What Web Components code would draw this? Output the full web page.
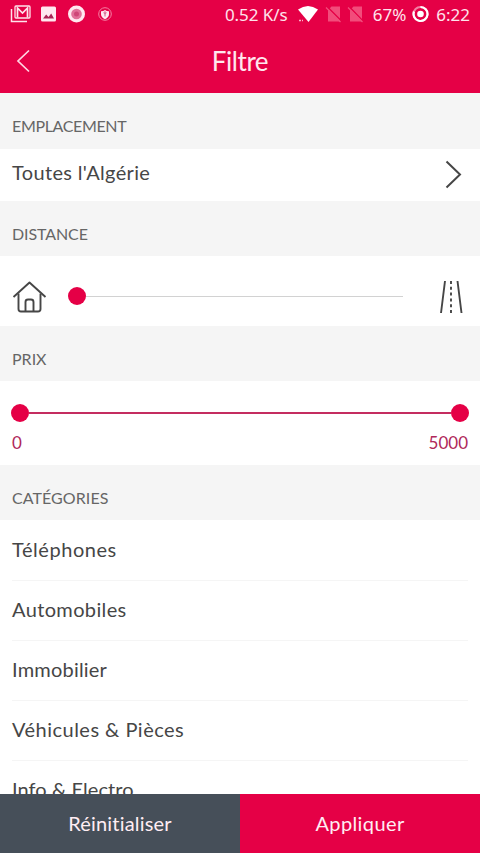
<!DOCTYPE html>
<html lang="fr">
<head>
<meta charset="utf-8">
<meta name="viewport" content="width=device-width, initial-scale=1">
<title>Filtre</title>
<style>
  body {
    margin: 0;
    height: 100vh;
    overflow: hidden;
    background-color: #fff;
    color: #464646;
    font-family: Lato, "Open Sans", sans-serif;
    font-size: 20px;
    font-variant-ligatures: none;
    --accent: #e50046;
  }
</style>
</head>
<body>
<filter-page>
  <status-bar slot="top"></status-bar>
  <nav-header slot="top">Filtre</nav-header>

  <filter-section heading="EMPLACEMENT" style="--head: 56px; --tracking: -0.35px">
    <location-row>Toutes l'Algérie</location-row>
  </filter-section>
  <filter-section heading="DISTANCE" style="--tracking: -0.1px">
    <distance-row></distance-row>
  </filter-section>
  <filter-section heading="PRIX">
    <price-range min="0" max="5000"></price-range>
  </filter-section>
  <filter-section heading="CATÉGORIES" style="--tracking: 0.07px">
    <category-item style="letter-spacing: 0.55px">Téléphones</category-item>
    <category-item style="letter-spacing: 0.36px">Automobiles</category-item>
    <category-item style="letter-spacing: 0.2px">Immobilier</category-item>
    <category-item style="letter-spacing: 0.48px">Véhicules &amp; Pièces</category-item>
    <category-item style="letter-spacing: 0.08px">Info &amp; Electro</category-item>
  </filter-section>

  <action-button slot="actions" style="--fill: #464f59; letter-spacing: 0.2px">Réinitialiser</action-button>
  <action-button slot="actions" style="--fill: #e50046; letter-spacing: 0.4px">Appliquer</action-button>
</filter-page>

<script>
class BaseElement extends HTMLElement {
  constructor() {
    super();
    this.shadowDOM = this.attachShadow({ mode: "open" });
  }

  connectedCallback() {
    this.render();
  }
}

class FilterPage extends BaseElement {
  render() {
    this.shadowDOM.innerHTML = `
      <style>
        :host {
          display: flex;
          flex-direction: column;
          height: 100vh;
        }
        header {
          flex: none;
          height: 93px;
          background-color: var(--accent);
        }
        main {
          flex: 1;
          min-height: 0;
          overflow: hidden;
        }
        footer {
          flex: none;
          display: flex;
          height: 59px;
        }
      </style>
      <header><slot name="top"></slot></header>
      <main><slot></slot></main>
      <footer><slot name="actions"></slot></footer>`;
  }
}

class StatusBar extends BaseElement {
  render() {
    this.shadowDOM.innerHTML = `
      <style>
        :host {
          display: flex;
          justify-content: space-between;
          height: 28px;
          padding: 0 10px;
          color: #ffe3ec;
          font-family: "Noto Sans", sans-serif;
          font-size: 17px;
          line-height: 29px;
        }
        .group {
          display: flex;
          align-items: center;
        }
        svg {
          display: block;
        }
        .speed { margin-right: 9px; letter-spacing: -0.05px; }
        .battery { margin-left: 10px; }
        .ring { margin: 0 7px 0 6px; }
      </style>
      <div class="group">
        <svg width="104" height="28" viewBox="10 0 104 28">
          <g fill="none" stroke="#ffe3ec">
            <path d="M11.500 9v12.500H27" stroke-width="1.500"/>
            <rect x="15" y="6" width="15" height="12" rx="1" stroke-width="1.300"/>
            <path d="M17.500 17.500V8l5 5 5-5v9.500" stroke-width="1.700"/>
          </g>
          <rect x="41" y="6.500" width="15" height="15" rx="1.500" fill="#ffe8f0"/>
          <path d="M43 18.500l3.200-4 2.300 2.600 2.700-3.600L54 18.500z" fill="#a92455"/>
          <circle cx="76.500" cy="14" r="8.500" fill="#ffe8f0"/>
          <circle cx="76.500" cy="14" r="5.300" fill="#e17099"/>
          <circle cx="76.500" cy="14" r="2.500" fill="#ce4778"/>
          <circle cx="105" cy="14" r="6.300" fill="none" stroke="#f47fa3"/>
          <path d="M101 11.200q2.500 0 4-1.200 1.500 1.200 4 1.200v3q0 3.200-4 5-4-1.800-4-5z" fill="#ffe8f0"/>
          <path d="M105 14v2.500M104 12.800a1 1 0 1 0 2 0a1 1 0 1 0-2 0" fill="none" stroke="#ce4778" stroke-width=".9"/>
        </svg>
      </div>
      <div class="group">
        <span class="speed">0.52 K/s</span>
        <svg width="66" height="28" viewBox="296 0 66 28">
          <path d="M297 9.500q10-7 20 0L307.500 22z" fill="#fff"/>
          <path d="M298 20.500h2M301 20.500h1" stroke="#ffb3cb" stroke-width="1.500"/>
          <path d="M330.500 6.500h8.500v15h-12v-11.500z M352.500 6.500h8.500v15h-12v-11.500z" fill="#f24c7b"/>
          <path d="M326.500 7l14.500 14.500M348.500 7l14 14.500" stroke="#e50046" stroke-width="1.500"/>
          <path d="M325 7.500l14.500 14.500M347 7.500l14.500 14.500" stroke="#f24c7b" stroke-width="1.300"/>
        </svg>
        <span class="battery">67%</span>
        <svg class="ring" width="17" height="28" viewBox="0 0 17 28">
          <circle cx="8.500" cy="14" r="7" fill="none" stroke="#f37fa3" stroke-width="2"/>
          <path d="M8.500 7a7 7 0 1 1-6.500 4.500" fill="none" stroke="#fff" stroke-width="2.200"/>
          <circle cx="8.500" cy="14" r="3.300" fill="#fff"/>
        </svg>
        <span>6:22</span>
      </div>`;
  }
}

class NavHeader extends BaseElement {
  render() {
    this.shadowDOM.innerHTML = `
      <style>
        :host {
          display: grid;
          grid-template-columns: 48px 1fr 48px;
          align-items: center;
          height: 65px;
          color: #ffe6ee;
          font-size: 26px;
          text-align: center;
          letter-spacing: -0.45px;
        }
        svg { display: block; }
      </style>
      <svg width="48" height="65" viewBox="0 0 48 65" fill="none" stroke="#ffd5e2" stroke-width="1.700">
        <path d="M29 22.500L18 33l11 10.500"/>
      </svg>
      <span><slot></slot></span>`;
  }
}

class FilterSection extends BaseElement {
  render() {
    this.shadowDOM.innerHTML = `
      <style>
        :host {
          display: block;
        }
        h2 {
          box-sizing: border-box;
          height: var(--head, 55px);
          margin: 0;
          padding: 4px 12px 0;
          background-color: #f5f5f5;
          color: #666;
          font-size: 16px;
          font-weight: normal;
          letter-spacing: var(--tracking, 0);
          line-height: 57px;
        }
      </style>
      <h2>${this.getAttribute("heading")}</h2>
      <slot></slot>`;
  }
}

class LocationRow extends BaseElement {
  render() {
    this.shadowDOM.innerHTML = `
      <style>
        :host {
          display: flex;
          justify-content: space-between;
          height: 52px;
          padding: 0 18px 0 12px;
          letter-spacing: 0.35px;
          line-height: 46px;
        }
      </style>
      <span><slot></slot></span>
      <svg width="18" height="52" viewBox="444 149 18 52" fill="none" stroke="#464646" stroke-width="2">
        <path d="M446.500 161.500L460 174.500l-13.500 13"/>
      </svg>`;
  }
}

class DistanceRow extends BaseElement {
  render() {
    this.shadowDOM.innerHTML = `
      <style>
        :host {
          display: flex;
          align-items: center;
          height: 70px;
          padding: 0 17px 0 12px;
        }
        .slider {
          flex: 1;
          display: flex;
          align-items: center;
          margin: 10px 36px 0 21px;
        }
        .knob {
          width: 18px;
          height: 18px;
          border-radius: 50%;
          background-color: var(--accent);
        }
        .line {
          flex: 1;
          height: 1px;
          background-color: #d2d2d2;
        }
      </style>
      <svg width="35" height="70" viewBox="12 256 35 70" fill="none" stroke="#464646" stroke-width="1.900" stroke-linejoin="round">
        <path d="M13.500 297L29.500 282.500 45.500 297"/>
        <path d="M18.500 293.500V309q0 2.500 2.500 2.500h17q2.500 0 2.500-2.500V293.500"/>
        <path d="M25.500 311v-9q0-2.500 2.500-2.500h3q2.500 0 2.500 2.500v9"/>
      </svg>
      <div class="slider"><div class="knob"></div><div class="line"></div></div>
      <svg width="24" height="70" viewBox="439 256 24 70" fill="none" stroke="#464646" stroke-width="1.900">
        <path d="M445 281l-4 32M457.500 281l4 32"/>
        <path d="M451 281v32" stroke-dasharray="3 2.800"/>
      </svg>`;
  }
}

class PriceRange extends BaseElement {
  render() {
    this.shadowDOM.innerHTML = `
      <style>
        :host {
          display: block;
          box-sizing: border-box;
          height: 84px;
          padding: 23px 11px 0;
          color: #b0285a;
          font-size: 17px;
        }
        .track {
          display: flex;
          align-items: center;
        }
        .knob {
          width: 18px;
          height: 18px;
          border-radius: 50%;
          background-color: var(--accent);
        }
        .line {
          flex: 1;
          height: 2px;
          background-color: #c42d60;
        }
        .values {
          display: flex;
          justify-content: space-between;
          padding: 0 1px;
          line-height: 42px;
        }
      </style>
      <div class="track"><div class="knob"></div><div class="line"></div><div class="knob"></div></div>
      <div class="values"><span>${this.getAttribute("min")}</span><span>${this.getAttribute("max")}</span></div>`;
  }
}

class CategoryItem extends BaseElement {
  render() {
    this.shadowDOM.innerHTML = `
      <style>
        :host {
          display: block;
          height: 60px;
          margin: 0 12px;
          box-shadow: 0 1px #f5f5f5;
          line-height: 59px;
        }
      </style>
      <slot></slot>`;
  }
}

class ActionButton extends BaseElement {
  render() {
    this.shadowDOM.innerHTML = `
      <style>
        :host {
          flex: 1;
          display: block;
          background-color: var(--fill);
          color: #ffedf3;
          line-height: 58px;
          text-align: center;
        }
      </style>
      <slot></slot>`;
  }
}

customElements.define("filter-page", FilterPage);
customElements.define("status-bar", StatusBar);
customElements.define("nav-header", NavHeader);
customElements.define("filter-section", FilterSection);
customElements.define("location-row", LocationRow);
customElements.define("distance-row", DistanceRow);
customElements.define("price-range", PriceRange);
customElements.define("category-item", CategoryItem);
customElements.define("action-button", ActionButton);
</script>
</body>
</html>
